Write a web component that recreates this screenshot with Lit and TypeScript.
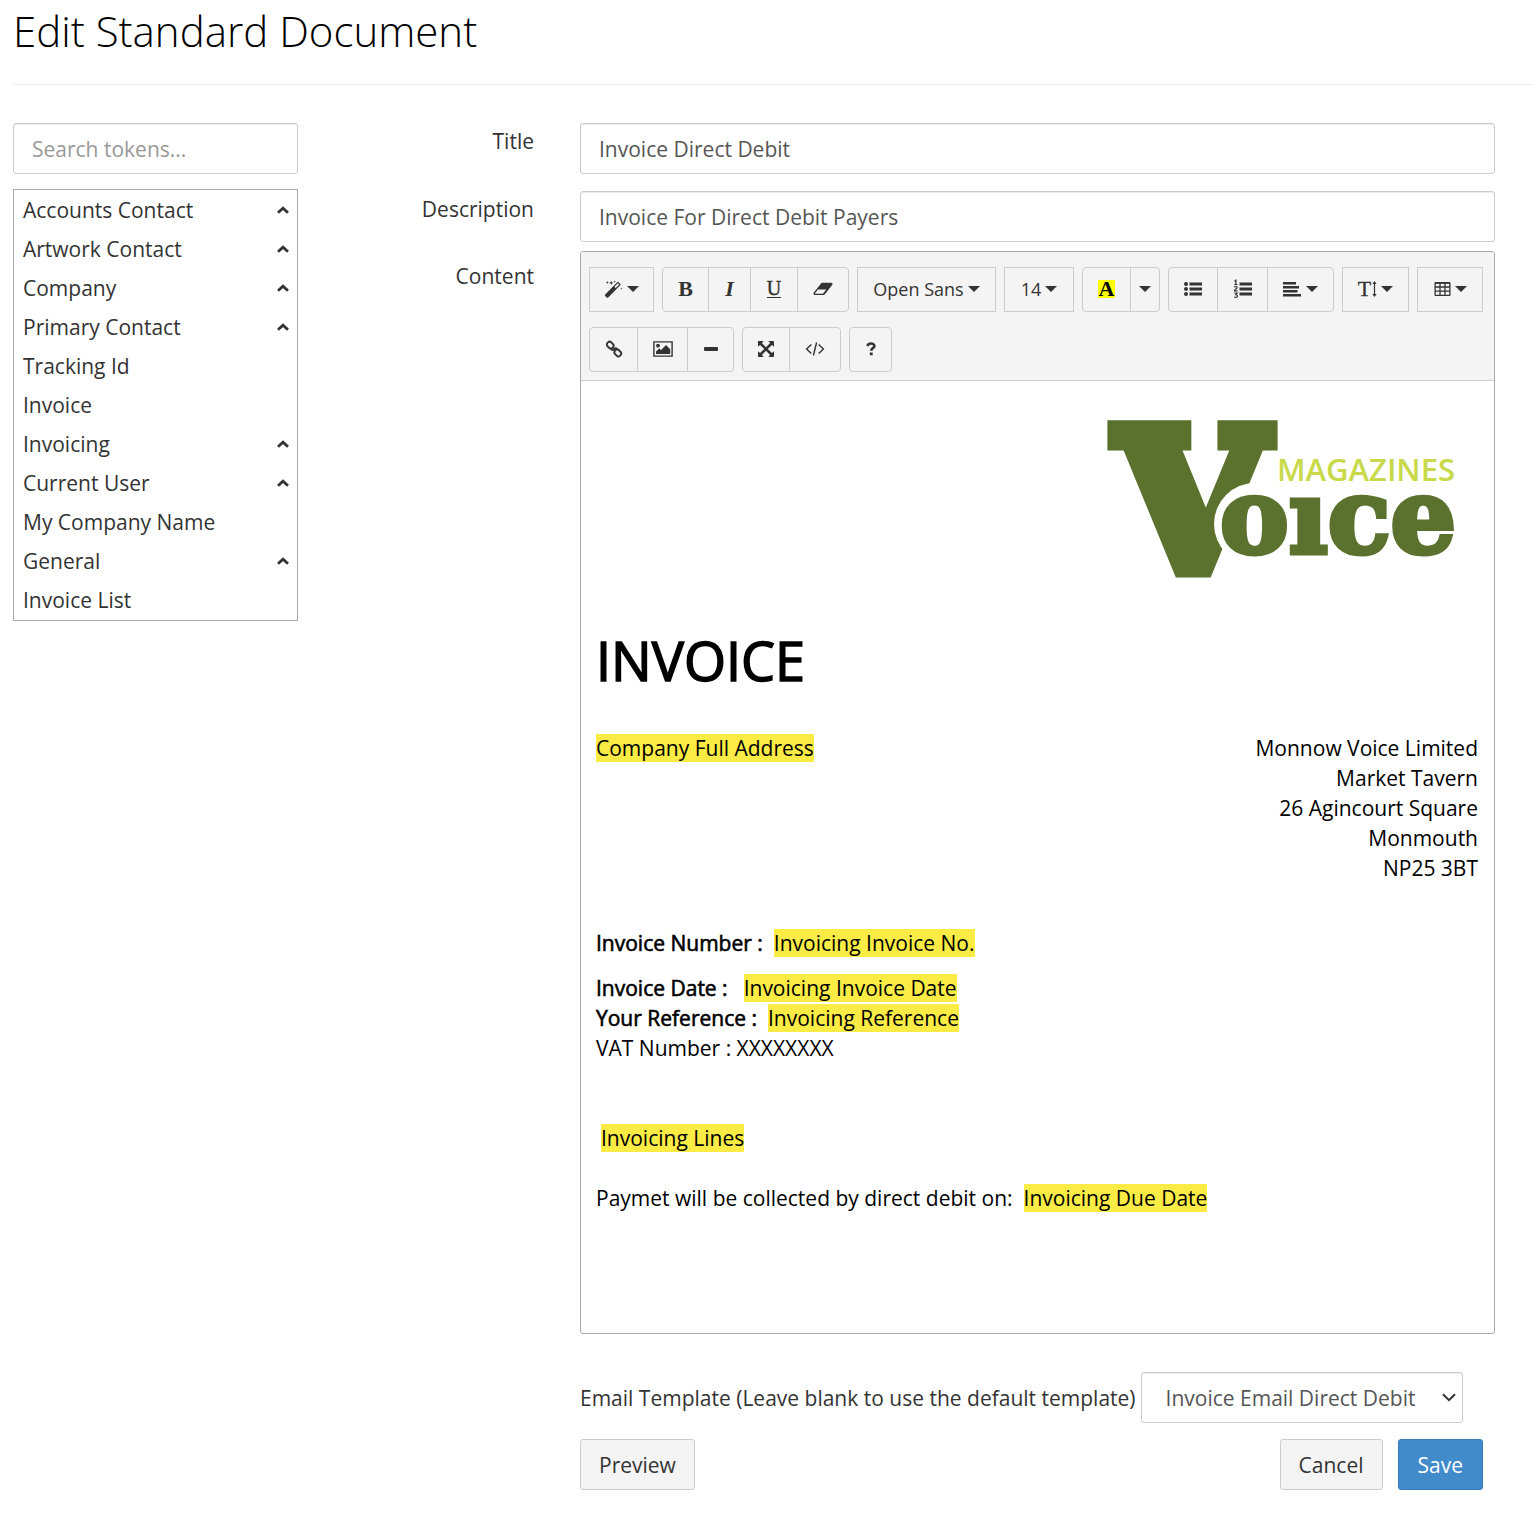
import { LitElement, html, svg, css, nothing } from "lit";
import { customElement, property, state } from "lit/decorators.js";

type IconName =
  | "magic" | "eraser" | "list-ul" | "list-ol" | "align" | "height" | "table"
  | "link" | "picture" | "minus" | "expand" | "code" | "question" | "caret" | "chevron-up" | "chevron-down";

const icons: Record<IconName, { w: number; h: number; body: unknown }> = {
  magic: {
    w: 19, h: 18,
    body: svg`
      <path d="M1.2 14.600 13.200 2.200a1 1 0 0 1 1.400 0l1.600 1.600a1 1 0 0 1 0 1.400L4.200 17.400a1 1 0 0 1-1.400 0L1.200 16a1 1 0 0 1 0-1.400z" fill="currentColor"/>
      <path d="M10.400 6.800 13.900 3.300l1.300 1.300-3.500 3.500z" fill="#f4f4f4"/>
      <path d="M3.3 1l.4 1.1 1.1.4-1.1.4-.4 1.1-.4-1.1-1.1-.4 1.1-.4zM7.2.8l.6 1.5 1.5.6-1.5.6-.6 1.5-.6-1.5-1.500-.6 1.500-.6zM10.700.4l.3.900.9.3-.9.3-.3.900-.3-.9-.9-.3.900-.3zM17.400 7.600l.3.900.9.3-.9.3-.3.900-.3-.9-.9-.3.900-.3z" fill="currentColor"/>`,
  },
  eraser: {
    w: 20, h: 14,
    body: svg`<path fill-rule="evenodd" fill="currentColor" d="M8.200 1.300A1.900 1.900 0 0 1 9.600.700h8.700a1.300 1.300 0 0 1 1 2.100l-7.400 9.400a1.900 1.900 0 0 1-1.500.7H1.700A1.300 1.300 0 0 1 .7 10.800zM9.900 11.700l3.300-4.200H4.900l-3.100 4.200z"/>`,
  },
  "list-ul": {
    w: 20, h: 16,
    body: svg`<g fill="currentColor"><circle cx="3" cy="3" r="2"/><circle cx="3" cy="8" r="2"/><circle cx="3" cy="13" r="2"/>
      <path d="M6.500 1.500h12.500v3H6.500zM6.500 6.500h12.500v3H6.500zM6.500 11.500h12.500v3H6.500z"/></g>`,
  },
  "list-ol": {
    w: 20, h: 20,
    body: svg`<path fill="currentColor" d="M6.500 3.500h12.500v3H6.500zM6.500 8.500h12.500v3H6.500zM6.500 13.500h12.500v3H6.500z"/>
      <path fill="none" stroke="currentColor" stroke-width="1.200" d="M1.500 2.200 2.900 1.200v4.300M1.300 5.500h3.200M1.300 8.200c.4-1 2.900-1 2.800.3C4 9.700 1.500 10.400 1.500 11.900h3M1.300 14h2.900l-1.400 1.700c2.300 0 2 2.800.2 2.800-.8 0-1.500-.3-1.700-.7"/>`,
  },
  align: {
    w: 19, h: 16,
    body: svg`<path fill="currentColor" d="M0 1h13v2.400H0zM0 5h16v2.400H0zM0 9h14.500v2.400H0zM0 13h18v2.400H0z"/>`,
  },
  height: {
    w: 5, h: 16,
    body: svg`<path fill="currentColor" d="M2.500 0 4.600 3H3.100v10h1.500l-2.100 3L.4 13h1.500V3H.4z"/>`,
  },
  table: {
    w: 17, h: 16,
    body: svg`<path fill="none" stroke="currentColor" stroke-width="1.300" d="M1.700 1.600h13.600a.6.6 0 0 1 .6.6v11.600a.6.6 0 0 1-.6.6H1.700a.6.6 0 0 1-.6-.6V2.200a.6.6 0 0 1 .6-.6zM1 6h15M1 10.200h15M6 2v12.500M11 2v12.500"/><path d="M1 1h15v1.800H1z" fill="currentColor"/>`,
  },
  link: {
    w: 18, h: 18,
    body: svg`<g fill="none" stroke="currentColor" stroke-width="1.900"><rect x="1.700" y="2.400" width="7" height="5.400" rx="2.400" transform="rotate(45 5.200 5.100)"/>
      <rect x="9.300" y="10.200" width="7" height="5.400" rx="2.400" transform="rotate(45 12.800 12.900)"/><path d="M6.200 9.400c1.600 1 3.400.2 3.900-1M8.300 9.900c.7-1.300 2.400-1.900 3.800-1.200"/></g>`,
  },
  picture: {
    w: 20, h: 16,
    body: svg`<path fill="none" stroke="currentColor" stroke-width="1.400" d="M.9.900h18.200v14.200H.9z"/><circle cx="5" cy="4.700" r="1.900" fill="currentColor"/>
      <path fill="currentColor" d="M3 13v-2.500l3.200-3 1.800 1.600 5-5 4.200 4.200V13z"/>`,
  },
  minus: { w: 14, h: 4, body: svg`<rect width="14" height="4" rx="1" fill="currentColor"/>` },
  expand: {
    w: 16, h: 16,
    body: svg`<path fill="currentColor" d="M0 .7A.7.7 0 0 1 .7 0h5L3.900 2.100 8 6.200l4.100-4.100L10.300 0h5a.7.7 0 0 1 .7.7v5l-2-1.800L9.800 8l4.200 4.100 2-1.800v5a.7.7 0 0 1-.7.7h-5l1.800-2.100L8 9.800l-4.100 4.100L5.700 16h-5a.7.7 0 0 1-.7-.7v-5l2 1.800L6.200 8 2 3.900 0 5.700z"/>`,
  },
  code: {
    w: 20, h: 16,
    body: svg`<path fill="none" stroke="currentColor" stroke-width="1.400" d="M6.300 3.500 1.600 8l4.700 4.500M13.700 3.500 18.400 8l-4.700 4.500M11.600 1.500 8.400 14.500"/>`,
  },
  question: {
    w: 10, h: 14,
    body: svg`<path fill="none" stroke="currentColor" stroke-width="2.600" d="M1.300 4C1.900 2.300 3.200 1.500 5 1.500c2 0 3.400 1 3.400 2.500 0 2.200-3.200 2-3.200 4.700"/><rect x="3.800" y="10.400" width="2.900" height="2.900" rx=".4" fill="currentColor"/>`,
  },
  caret: { w: 12, h: 6, body: svg`<path d="M0 0h12L6 6z" fill="currentColor"/>` },
  "chevron-up": { w: 12, h: 8, body: svg`<path d="M1 6.700 6 2.200l5 4.500" fill="none" stroke="currentColor" stroke-width="2.800"/>` },
  "chevron-down": { w: 14, h: 9, body: svg`<path d="M1 1.200l6 6 6-6" fill="none" stroke="currentColor" stroke-width="2"/>` },
};

const icon = (name: IconName) => {
  const i = icons[name];
  return html`<svg width=${i.w} height=${i.h} viewBox="0 0 ${i.w} ${i.h}" aria-hidden="true">${i.body}</svg>`;
};

interface Tool {
  label: string;
  size: string;
  content: unknown;
  menu?: boolean;
}

@customElement("editor-toolbar")
export class EditorToolbar extends LitElement {
  static styles = css`
    :host { display: block; }
    .toolbar {
      display: flex; flex-wrap: wrap; gap: 15px 8px;
      padding: 15px 8px 8px; background: #f4f4f4;
      border-bottom: 1px solid #d0d0d0;
    }
    .group { display: flex; }
    .tool {
      display: flex; align-items: center; justify-content: center; gap: 4px;
      box-sizing: border-box; height: 45px; padding: 0 0 1px; margin: 0 0 0 -1px;
      border: 1px solid #ccc; background: #f4f4f4; color: #333;
      font: 18px/27px "Open Sans", sans-serif; cursor: pointer; white-space: nowrap;
    }
    .tool:first-child { margin-left: 0; }
    .group.round .tool:first-child { border-radius: 4px 0 0 4px; }
    .group.round .tool:last-child { border-radius: 0 4px 4px 0; }
    .group.round .tool:only-child { border-radius: 4px; }
    .tool svg { display: block; flex: none; }
    .w30 { width: 30px; } .w43 { width: 43px; } .w47 { width: 47px; } .w48 { width: 48px; }
    .w49 { width: 49px; } .w50 { width: 50px; } .w51 { width: 51px; } .w52 { width: 52px; }
    .w65 { width: 65px; } .w66 { width: 66px; } .w67 { width: 67px; } .w70 { width: 70px; }
    .w139 { width: 139px; }
    .serif { font-family: "Liberation Serif", serif; font-size: 22px; line-height: 24px; }
    .bold { font-weight: 700; }
    .italic { font-style: italic; font-weight: 700; }
    .under { font-size: 20px; line-height: 17px; border-bottom: 1px solid #333; -webkit-text-stroke: 0.4px #333; }
    .mark { background: #ff0; color: #000; font-weight: 700; line-height: 18px; padding: 0 1px; }
    .tall { display: flex; align-items: center; gap: 1px; -webkit-text-stroke: 0.3px #333; }
  `;

  private groups: { round: boolean; tools: Tool[] }[] = [
    { round: false, tools: [{ label: "Style", size: "w65", content: icon("magic"), menu: true }] },
    {
      round: true,
      tools: [
        { label: "Bold", size: "w47", content: html`<span class="serif bold">B</span>` },
        { label: "Italic", size: "w43", content: html`<span class="serif italic">I</span>` },
        { label: "Underline", size: "w48", content: html`<span class="serif under">U</span>` },
        { label: "Remove font style", size: "w52", content: icon("eraser") },
      ],
    },
    { round: false, tools: [{ label: "Font family", size: "w139", content: "Open Sans", menu: true }] },
    { round: false, tools: [{ label: "Font size", size: "w70", content: "14", menu: true }] },
    {
      round: true,
      tools: [
        { label: "Recent colour", size: "w49", content: html`<span class="serif mark">A</span>` },
        { label: "More colours", size: "w30", content: nothing, menu: true },
      ],
    },
    {
      round: true,
      tools: [
        { label: "Unordered list", size: "w50", content: icon("list-ul") },
        { label: "Ordered list", size: "w51", content: icon("list-ol") },
        { label: "Paragraph", size: "w67", content: icon("align"), menu: true },
      ],
    },
    {
      round: false,
      tools: [{ label: "Line height", size: "w67", content: html`<span class="tall"><span class="serif">T</span>${icon("height")}</span>`, menu: true }],
    },
    { round: false, tools: [{ label: "Table", size: "w66", content: icon("table"), menu: true }] },
    {
      round: true,
      tools: [
        { label: "Link", size: "w49", content: icon("link") },
        { label: "Picture", size: "w51", content: icon("picture") },
        { label: "Horizontal rule", size: "w47", content: icon("minus") },
      ],
    },
    {
      round: true,
      tools: [
        { label: "Full screen", size: "w48", content: icon("expand") },
        { label: "Code view", size: "w52", content: icon("code") },
      ],
    },
    { round: true, tools: [{ label: "Help", size: "w43", content: icon("question") }] },
  ];

  render() {
    return html`<div class="toolbar" role="toolbar" aria-label="Formatting">
      ${this.groups.map(
        (g) => html`<div class="group ${g.round ? "round" : ""}">
          ${g.tools.map(
            (t) => html`<button type="button" class="tool ${t.size}" aria-label=${t.label}>${t.content}${t.menu ? icon("caret") : nothing}</button>`
          )}
        </div>`
      )}
    </div>`;
  }
}

@customElement("voice-logo")
export class VoiceLogo extends LitElement {
  static styles = css`
    :host { display: block; line-height: 0; }
    .art { overflow: visible; }
    .slab { font-family: "DejaVu Serif", serif; font-weight: 700; fill: #5a722e; stroke: #5a722e; stroke-linejoin: miter; }
    .initial { font-size: 190px; stroke-width: 19px; }
    .rest { font-size: 103px; stroke-width: 5px; }
    .sub { font-family: "Open Sans", sans-serif; font-weight: 600; font-size: 31px; fill: #c8d94a; }
    .halo { fill: #fff; }
  `;

  render() {
    return html`<svg class="art" width="350" height="162" viewBox="0 0 350 162" role="img" aria-label="Voice Magazines">
      <text class="slab initial" x="10" y="149">V</text>
      <circle class="halo" cx="147" cy="105" r="41"></circle>
      <text class="slab rest" x="112" y="134">oıce</text>
      <text class="sub" x="169" y="62">MAGAZINES</text>
    </svg>`;
  }
}

@customElement("token-list")
export class TokenList extends LitElement {
  static styles = css`
    :host { display: block; }
    .search {
      display: block; box-sizing: border-box; width: 100%; height: 51px; margin-bottom: 15px;
      padding: 0 18px; border: 1px solid #ccc; border-radius: 3px; background: #fff; color: #555;
      box-shadow: inset 0 1px 1px rgba(0, 0, 0, 0.08); font: 21px/30px "Open Sans", sans-serif;
    }
    .search::placeholder { color: #999; opacity: 1; }
    .list { margin: 0; padding: 0 0 1px; list-style: none; border: 1px solid #a9a9a9; }
    .token {
      display: flex; align-items: center; justify-content: space-between;
      width: 100%; height: 39px; padding: 0 8px 0 9px; border: 0; background: none;
      color: #333; font: 21px/30px "Open Sans", sans-serif; text-align: left; cursor: pointer;
    }
  `;

  @property({ attribute: false }) tokens: { name: string; group: boolean }[] = [];
  @state() private query = "";

  render() {
    const shown = this.tokens.filter((t) => t.name.toLowerCase().includes(this.query.toLowerCase()));
    return html`
      <input class="search" type="search" aria-label="Search tokens" placeholder="Search tokens..."
        @input=${(e: InputEvent) => (this.query = (e.target as HTMLInputElement).value)} />
      <ul class="list">
        ${shown.map((t) => html`<li><button type="button" class="token"><span>${t.name}</span>${t.group ? icon("chevron-up") : nothing}</button></li>`)}
      </ul>`;
  }
}

@customElement("app-root")
export class AppRoot extends LitElement {
  static styles = css`
    :host { display: block; font: 21px/30px "Open Sans", sans-serif; color: #333; background: #fff; }
    .page { padding: 0 0 47px 13px; }
    .heading {
      margin: 0 0 38px; padding: 8px 0 30px; border-bottom: 1px solid #eee;
      font-size: 42px; line-height: 46px; font-weight: 300; color: #000;
    }
    .columns { display: grid; grid-template-columns: 285px minmax(0, 1fr); gap: 46px; padding-right: 39px; align-items: start; }
    .form { display: grid; grid-template-columns: 190px minmax(0, 1fr); column-gap: 46px; margin: 0; }
    .label { padding-top: 3px; text-align: right; }
    .label.content { padding-top: 10px; }
    .field {
      box-sizing: border-box; width: 100%; height: 51px; padding: 0 18px; margin: 0 0 17px;
      border: 1px solid #ccc; border-radius: 3px; background: #fff; color: #555;
      box-shadow: inset 0 1px 1px rgba(0, 0, 0, 0.08); font: inherit;
    }
    .field.tight { margin-bottom: 9px; }
    .editor { border: 1px solid #a9a9a9; border-radius: 3px; overflow: hidden; }
    .document { padding: 38px 16px 120px 15px; color: #000; outline: none; }
    .logo { display: flex; justify-content: flex-end; padding-right: 20px; }
    .invoice { margin: 49px 0 42px; font-size: 54px; line-height: 61px; font-weight: 400; -webkit-text-stroke: 1.5px #000; }
    .parties { display: flex; justify-content: space-between; margin-bottom: 45px; }
    .address { text-align: right; }
    .para { margin: 0 0 15px; }
    .strong { font-weight: 400; -webkit-text-stroke: 0.6px #000; }
    .chip { background: #faec45; }
    .gap { margin-left: 11px; }
    .gap.wide { margin-left: 16px; }
    .lines { margin: 60px 0 30px 5px; }
    .last { margin: 0; }
    .template { grid-column: 2; display: flex; align-items: center; gap: 5px; margin-top: 38px; white-space: nowrap; }
    .picker { position: relative; flex: 0 1 322px; }
    .select {
      display: block; box-sizing: border-box; width: 100%; height: 51px; padding: 0 30px 0 24px;
      appearance: none; border: 1px solid #ccc; border-radius: 3px; background: #fff; color: #555;
      box-shadow: inset 0 1px 1px rgba(0, 0, 0, 0.08); font: inherit;
    }
    .picker svg { position: absolute; right: 7px; top: 21px; pointer-events: none; }
    .actions { grid-column: 2; display: flex; gap: 15px; margin-top: 16px; padding-right: 12px; }
    .action {
      height: 51px; padding: 0 18px; border: 1px solid #ccc; border-radius: 3px;
      background: #f4f4f4; color: #333; font: inherit; cursor: pointer;
    }
    .action.first { margin-right: auto; }
    .action.primary { padding: 0 19px; background: #428bca; border-color: #357ebd; color: #fff; }
  `;

  private tokens = [
    { name: "Accounts Contact", group: true },
    { name: "Artwork Contact", group: true },
    { name: "Company", group: true },
    { name: "Primary Contact", group: true },
    { name: "Tracking Id", group: false },
    { name: "Invoice", group: false },
    { name: "Invoicing", group: true },
    { name: "Current User", group: true },
    { name: "My Company Name", group: false },
    { name: "General", group: true },
    { name: "Invoice List", group: false },
  ];

  render() {
    return html`<main class="page">
      <h1 class="heading">Edit Standard Document</h1>
      <div class="columns">
        <token-list .tokens=${this.tokens}></token-list>
        <form class="form" @submit=${(e: Event) => e.preventDefault()}>
          <label class="label" for="title">Title</label>
          <input class="field" id="title" type="text" value="Invoice Direct Debit" />
          <label class="label" for="description">Description</label>
          <input class="field tight" id="description" type="text" value="Invoice For Direct Debit Payers" />
          <span class="label content" id="content-label">Content</span>
          <div class="editor">
            <editor-toolbar></editor-toolbar>
            <div class="document" contenteditable="true" spellcheck="false" role="textbox" aria-multiline="true" aria-labelledby="content-label">
              <div class="logo"><voice-logo></voice-logo></div>
              <h2 class="invoice">INVOICE</h2>
              <div class="parties">
                <div><span class="chip">Company Full Address</span></div>
                <div class="address">Monnow Voice Limited<br />Market Tavern<br />26 Agincourt Square<br />Monmouth<br />NP25 3BT</div>
              </div>
              <p class="para"><b class="strong">Invoice Number :</b><span class="chip gap">Invoicing Invoice No.</span></p>
              <div><b class="strong">Invoice Date :</b><span class="chip gap wide">Invoicing Invoice Date</span></div>
              <div><b class="strong">Your Reference :</b><span class="chip gap">Invoicing Reference</span></div>
              <div>VAT Number : XXXXXXXX</div>
              <p class="lines"><span class="chip">Invoicing Lines</span></p>
              <p class="last">Paymet will be collected by direct debit on:<span class="chip gap">Invoicing Due Date</span></p>
            </div>
          </div>
          <div class="template">
            <label for="template">Email Template (Leave blank to use the default template)</label>
            <div class="picker">
              <select class="select" id="template"><option>Invoice Email Direct Debit</option></select>
              ${icon("chevron-down")}
            </div>
          </div>
          <div class="actions">
            <button type="button" class="action first">Preview</button>
            <button type="button" class="action">Cancel</button>
            <button type="submit" class="action primary">Save</button>
          </div>
        </form>
      </div>
    </main>`;
  }
}
